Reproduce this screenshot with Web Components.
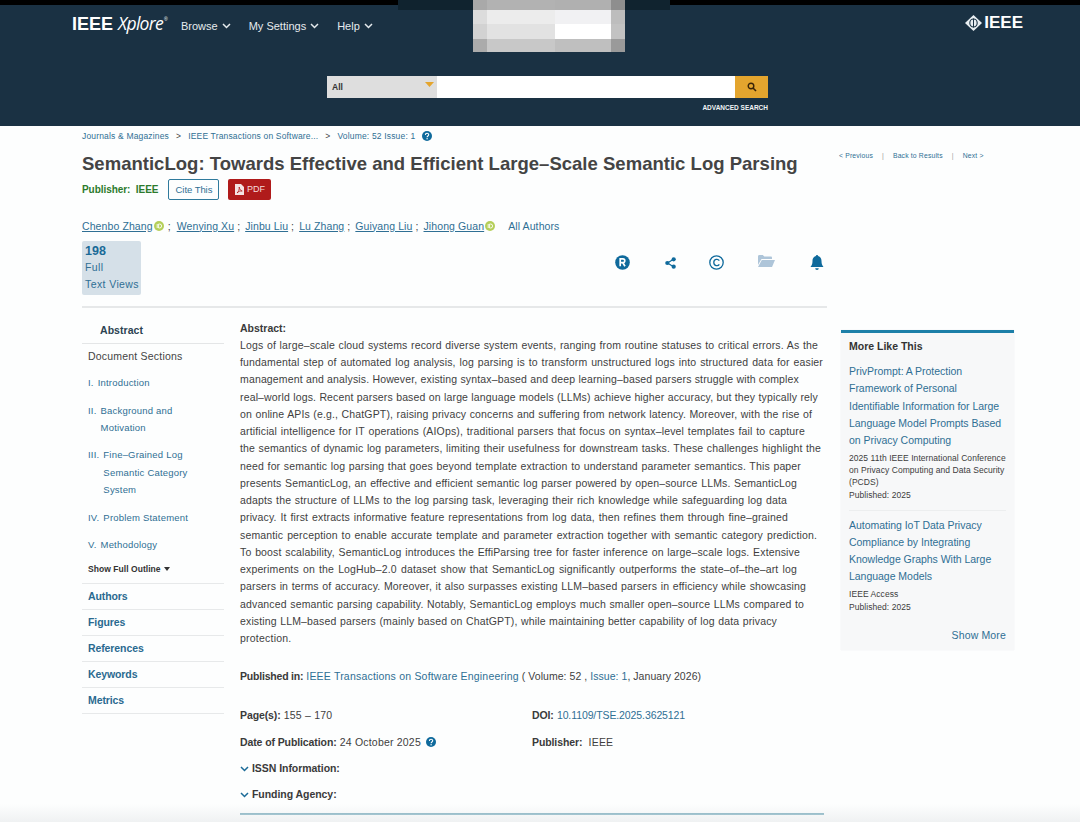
<!DOCTYPE html>
<html><head><meta charset="utf-8">
<style>
html,body{margin:0;padding:0;background:#fdfefe;}
body{width:1080px;height:822px;overflow:hidden;position:relative;font-family:"Liberation Sans",Arial,sans-serif;color:#3c3c3c;}
</style></head>
<body>
<ieee-header></ieee-header>
<article-page></article-page>
<photo-fade></photo-fade>
<script>
const LINK='#2f6f94';
function def(name,html){
  customElements.define(name,class extends HTMLElement{
    constructor(){super();this.attachShadow({mode:'open'}).innerHTML=html;}
  });
}
const orcid=`<svg width="10" height="10" viewBox="0 0 10 10" style="vertical-align:-0.5px"><circle cx="5" cy="5" r="5" fill="#b5cf5a"/><path d="M3.2 3v4M4.6 3v4h1a2 2 0 0 0 0-4z" fill="none" stroke="#fff" stroke-width=".9"/></svg>`;
const help=`<svg width="10" height="10" viewBox="0 0 10 10"><circle cx="5" cy="5" r="5" fill="#0f6a9c"/><path d="M3.4 3.9c0-2.1 3.3-2.1 3.3-.1 0 1.2-1.6 1.2-1.6 2.4" fill="none" stroke="#fff" stroke-width="1.1"/><circle cx="5.1" cy="7.7" r=".7" fill="#fff"/></svg>`;
const chev=`<svg width="9" height="6" viewBox="0 0 9 6"><path d="M1 1l3.5 3.5L8 1" fill="none" stroke="currentColor" stroke-width="1.5"/></svg>`;

def('photo-fade',`<style>
:host{position:absolute;left:0;right:0;bottom:0;height:18px;background:linear-gradient(rgba(238,240,241,0),rgba(238,240,241,.9));pointer-events:none;}
</style>`);

def('pixel-blur',`<style>
:host{position:absolute;left:473px;top:0;width:152px;height:52px;display:grid;grid-template-columns:14px 68px 56px 14px;grid-template-rows:10px 14px 15px 13px;}
i{display:block}
</style>
<i style="background:#a9a9a9"></i><i style="background:#b2b2b2"></i><i style="background:#b0b0b0"></i><i style="background:#8e8e8e"></i>
<i style="background:#dcdcdc"></i><i style="background:#ececec"></i><i style="background:#f1f1f3"></i><i style="background:#bdbdbd"></i>
<i style="background:#d2d2d2"></i><i style="background:#e2e2e2"></i><i style="background:#fff"></i><i style="background:#c2c2c2"></i>
<i style="background:#ababab"></i><i style="background:#c8c8c8"></i><i style="background:#bfbfbf"></i><i style="background:#9a9a9a"></i>`);

def('ieee-header',`<style>
:host{display:block;height:126px;background:#1a3143;color:#fff;position:relative;overflow:hidden;font-family:"Liberation Sans",Arial,sans-serif;}
.black{height:5px;background:#000;}
.notch{position:absolute;left:398px;top:0;width:272px;height:10px;background:#10232f;}
.top{display:flex;align-items:center;padding:6px 57px 0 72px;height:26px;}
.logo{font:bold 18px "Liberation Sans Narrow","Liberation Sans",sans-serif;width:109px;white-space:nowrap;margin-top:-2px;}
.logo em{font:italic 400 17.500px "Open Sans","Liberation Sans",sans-serif;letter-spacing:-.7px;}
.logo sup{font:400 5px "Liberation Sans",sans-serif;vertical-align:9px;line-height:0;margin-left:1px;}
nav{display:flex;gap:18px;font-size:11px;color:#e6ebee;margin-top:3px;}
nav span{display:flex;align-items:center;gap:4px;white-space:nowrap;}
.brand{margin-left:auto;display:flex;align-items:center;gap:2px;font:bold 17px "Liberation Sans",sans-serif;margin-top:-3px;}
.search{display:flex;margin:39px 0 0 327px;width:441px;height:22px;}
.sel{width:110px;background:#dedede;color:#333;font-size:8.5px;font-weight:bold;display:flex;align-items:center;padding-left:5px;box-sizing:border-box;position:relative;}
.sel svg{position:absolute;right:3px;top:6px;}
.inp{flex:1;background:#fff;}
.btn{width:33px;background:#e4a52e;display:flex;align-items:center;justify-content:center;}
.adv{width:441px;margin:6px 0 0 327px;text-align:right;font-size:6.5px;font-weight:bold;color:#f0f3f5;}
</style>
<div class="black"></div><div class="notch"></div>
<div class="top">
  <div class="logo">IEEE <em>Xplore</em><sup>®</sup></div>
  <nav><span>Browse ${chev}</span><span>My Settings ${chev}</span><span>Help ${chev}</span></nav>
  <div class="brand"><svg width="17" height="16" viewBox="0 0 17 16"><path d="M8.5 0l8.500 8-8.500 8L0 8z" fill="#e8eef2"/><ellipse cx="8.500" cy="8" rx="3.700" ry="4" fill="none" stroke="#1a3143" stroke-width="1.100"/><path d="M8.500 3.500v9" stroke="#1a3143" stroke-width="1"/></svg>IEEE</div>
</div>
<div class="search">
  <div class="sel">All<svg width="9" height="5" viewBox="0 0 9 5"><path d="M0 0h9L4.500 5z" fill="#e4a52e"/></svg></div>
  <div class="inp"></div>
  <div class="btn"><svg width="10" height="10" viewBox="0 0 10 10"><circle cx="4" cy="4" r="2.800" fill="none" stroke="#3a2408" stroke-width="1.400"/><path d="M6 6l3 3" stroke="#3a2408" stroke-width="1.600"/></svg></div>
</div>
<div class="adv">ADVANCED SEARCH</div>
<pixel-blur></pixel-blur>`);

def('article-head',`<style>
:host{display:block;width:745px;border-bottom:2px solid #e6e8e9;height:182px;box-sizing:border-box;position:relative;}
.crumb{display:flex;align-items:center;font-size:8.500px;color:${LINK};height:19px;letter-spacing:.17px;white-space:nowrap;}
.crumb b{font-weight:400;margin:0 7px;color:#444;}
.crumb svg{margin-left:7px;}
h1{margin:8px 0 0;font-size:18.500px;line-height:21px;font-weight:bold;color:#444;letter-spacing:.02px;white-space:nowrap;}
.pub{display:flex;align-items:center;margin-top:4px;height:22px;font-size:10px;font-weight:bold;color:#2c7a2c;letter-spacing:-.05px;}
.cite{margin-left:10px;width:51px;height:21px;box-sizing:border-box;border:1px solid #2f7a9c;border-radius:2px;color:${LINK};font-weight:400;font-size:9.500px;display:flex;align-items:center;justify-content:center;}
.pdf{margin-left:9px;width:43px;height:21px;background:#b01b1b;border-radius:2px;color:#f4dcdc;font-weight:400;font-size:9px;display:flex;align-items:center;justify-content:center;gap:3px;}
.authors{margin-top:18px;height:15px;display:flex;align-items:center;font-size:10.500px;letter-spacing:.1px;color:#444;white-space:nowrap;}
.authors a{color:${LINK};text-decoration:underline;}
.authors svg{margin-left:1px;}
.authors i{font-style:normal;margin:0 5px 0 3px;}
.all{color:${LINK};margin-left:13px;}
.row{display:flex;margin-top:8px;}
.metric{width:59px;height:54px;box-sizing:border-box;background:#d5e0e8;border-radius:2px;padding:3px 3px;color:#2f6f94;font-size:10.500px;line-height:17px;letter-spacing:.4px;white-space:nowrap;}
.metric b{display:block;font-size:12.500px;line-height:15px;color:#1a6a97;font-weight:bold;letter-spacing:0;}
.icons{position:absolute;left:533px;top:127px;display:flex;align-items:center;width:212px;height:18px;}
.icons svg{position:absolute;}
</style>
<div class="crumb">Journals &amp; Magazines<b>&gt;</b>IEEE Transactions on Software...<b>&gt;</b>Volume: 52 Issue: 1${help}</div>
<h1>SemanticLog: Towards Effective and Efficient Large–Scale Semantic Log Parsing</h1>
<div class="pub">Publisher:&nbsp; IEEE<span class="cite">Cite This</span><span class="pdf"><svg width="9" height="11" viewBox="0 0 9 11"><path d="M0 0h6l3 3v8H0z" fill="#f4e4e4"/><path d="M2 9c1.500-1 2.500-3.500 2.200-6 .5 2.500 1.300 3.500 3 4-2-.2-3.500.3-5.200 2z" fill="none" stroke="#b01b1b" stroke-width=".8"/></svg>PDF</span></div>
<div class="authors"><a>Chenbo Zhang</a>${orcid}<i style="margin-left:4px;margin-right:6px">;</i><a>Wenying Xu</a><i>;</i><a>Jinbu Liu</a><i>;</i><a>Lu Zhang</a><i>;</i><a>Guiyang Liu</a><i>;</i><a>Jihong Guan</a>${orcid}<span class="all">All Authors</span></div>
<div class="row"><div class="metric"><b>198</b>Full<br>Text Views</div></div>
<div class="icons">
<svg style="left:0" width="15" height="15" viewBox="0 0 15 15"><circle cx="7.500" cy="7.500" r="7.300" fill="#0f6a9c"/><path d="M5.200 11.200V3.900h2.700c2.500 0 2.500 3.800 0 3.800H5.200M7.800 7.700l2.200 3.500" fill="none" stroke="#fff" stroke-width="1.700"/></svg>
<svg style="left:50px;top:4px" width="11" height="12" viewBox="0 0 11 12"><path d="M8.500 2.200L2.500 6l6 3.800" fill="none" stroke="#0f6a9c" stroke-width="1.200"/><circle cx="8.700" cy="2.300" r="2.100" fill="#0f6a9c"/><circle cx="2.300" cy="6" r="2.100" fill="#0f6a9c"/><circle cx="8.700" cy="9.700" r="2.100" fill="#0f6a9c"/></svg>
<svg style="left:94px" width="15" height="15" viewBox="0 0 15 15"><circle cx="7.500" cy="7.500" r="6.700" fill="none" stroke="#0f6a9c" stroke-width="1.300"/><path d="M10.300 5.600C9 3.500 4.800 4 4.800 7.500S9 11.500 10.300 9.400" fill="none" stroke="#0f6a9c" stroke-width="1.300"/></svg>
<svg style="left:143px;top:2px" width="17" height="12" viewBox="0 0 17 12"><path d="M0 1.500C0 .7.500 0 1.300 0h3.500l1.500 1.500h6.500c.7 0 1.200.5 1.200 1.200V4H3.500L0 10z" fill="#aec5d9"/><path d="M3.800 5H17l-3 7H0z" fill="#aec5d9"/></svg>
<svg style="left:195px;top:2px" width="14" height="16" viewBox="0 0 14 16"><path d="M7 1c3 0 4.500 2.300 4.500 5 0 3 .7 4.500 2 6H.5c1.300-1.500 2-3 2-6C2.500 3.300 4 1 7 1z" fill="#0f6a9c"/><circle cx="7" cy="1.300" r="1.200" fill="#0f6a9c"/><path d="M5.200 13.200h3.600a1.800 1.800 0 0 1-3.600 0z" fill="#0f6a9c"/></svg>
</div>`);

def('side-nav',`<style>
:host{display:block;width:142px;font-size:10px;color:${LINK};}
.abs{height:36px;box-sizing:border-box;padding:15px 0 0 18px;font-size:10.500px;font-weight:bold;color:#2c4352;border-bottom:1px solid #e4e6e7;line-height:14px;letter-spacing:.05px;}
.doc{padding:5px 0 0 6px;line-height:14px;font-size:10.500px;color:#444;letter-spacing:.2px;height:20px;}
ol{list-style:none;margin:0;padding:5px 0 0 6px;}
li{display:flex;gap:4px;line-height:17.300px;margin-bottom:10.300px;letter-spacing:.2px;font-size:9.500px;}
.more{padding-left:6px;font-size:8.500px;font-weight:bold;color:#333;height:21px;line-height:14px;margin-top:-2px;letter-spacing:.05px;}
.more svg{margin-left:1px;vertical-align:1px;}
.s{border-top:1px solid #e7e9ea;height:26px;box-sizing:border-box;padding-left:6px;line-height:25px;font-weight:bold;font-size:10.500px;letter-spacing:-.1px;color:#2a6a90;}
.s:last-child{border-bottom:1px solid #e7e9ea;height:27px;}
</style>
<div class="abs">Abstract</div>
<div class="doc">Document Sections</div>
<ol>
<li><span>I.</span><span>Introduction</span></li>
<li><span>II.</span><span>Background and<br>Motivation</span></li>
<li><span>III.</span><span>Fine–Grained Log<br>Semantic Category<br>System</span></li>
<li><span>IV.</span><span>Problem Statement</span></li>
<li><span>V.</span><span>Methodology</span></li>
</ol>
<div class="more">Show Full Outline <svg width="6" height="4" viewBox="0 0 6 4"><path d="M0 0h6L3 4z" fill="#333"/></svg></div>
<div class="s">Authors</div><div class="s">Figures</div><div class="s">References</div><div class="s">Keywords</div><div class="s">Metrics</div>`);

const lines=[
[578,'Logs of large–scale cloud systems record diverse system events, ranging from routine statuses to critical errors. As the'],
[583,'fundamental step of automated log analysis, log parsing is to transform unstructured logs into structured data for easier'],
[559,'management and analysis. However, existing syntax–based and deep learning–based parsers struggle with complex'],
[578,'real–world logs. Recent parsers based on large language models (LLMs) achieve higher accuracy, but they typically rely'],
[572,'on online APIs (e.g., ChatGPT), raising privacy concerns and suffering from network latency. Moreover, with the rise of'],
[565,'artificial intelligence for IT operations (AIOps), traditional parsers that focus on syntax–level templates fail to capture'],
[581,'the semantics of dynamic log parameters, limiting their usefulness for downstream tasks. These challenges highlight the'],
[561,'need for semantic log parsing that goes beyond template extraction to understand parameter semantics. This paper'],
[557,'presents SemanticLog, an effective and efficient semantic log parser powered by open–source LLMs. SemanticLog'],
[547,'adapts the structure of LLMs to the log parsing task, leveraging their rich knowledge while safeguarding log data'],
[548,'privacy. It first extracts informative feature representations from log data, then refines them through fine–grained'],
[577,'semantic perception to enable accurate template and parameter extraction together with semantic category prediction.'],
[560,'To boost scalability, SemanticLog introduces the EffiParsing tree for faster inference on large–scale logs. Extensive'],
[557,'experiments on the LogHub–2.0 dataset show that SemanticLog significantly outperforms the state–of–the–art log'],
[566,'parsers in terms of accuracy. Moreover, it also surpasses existing LLM–based parsers in efficiency while showcasing'],
[564,'advanced semantic parsing capability. Notably, SemanticLog employs much smaller open–source LLMs compared to'],
[537,'existing LLM–based parsers (mainly based on ChatGPT), while maintaining better capability of log data privacy']
].map(([w,t])=>`<p class="j" style="width:${w}px">${t}</p>`).join('');

def('abstract-body',`<style>
:host{display:block;width:584px;font-size:10.500px;line-height:17.240px;color:#3f3f3f;letter-spacing:.15px;}
b{color:#3a3a3a;letter-spacing:-.1px;}
a{color:${LINK};}
p{margin:0;white-space:nowrap;}
p.j{white-space:normal;text-align:justify;text-align-last:justify;height:17.240px;}
.h{font-weight:bold;color:#3a3a3a;margin-top:11px;line-height:18px;letter-spacing:0;}
.last{letter-spacing:.22px;}
.pubin{margin-top:21px;letter-spacing:.05px;}
.pubin b{letter-spacing:-.2px;}
.pubin a:first-of-type{letter-spacing:.2px;}
.grid{display:grid;grid-template-columns:292px 1fr;margin-top:22px;row-gap:9px;letter-spacing:.2px;}
.doi{letter-spacing:-.1px;}
.x{display:flex;align-items:center;gap:3px;height:26px;font-weight:bold;color:#3a3a3a;letter-spacing:-.05px;}
.x svg{color:#1a6a97;}
.rule{margin-top:5px;height:2px;background:#4f93a8;}
.q{display:inline-block;margin-left:2px;vertical-align:-1px;line-height:0;}
</style>
<p class="h">Abstract:</p>
${lines}
<p class="last">protection.</p>
<p class="pubin"><b>Published in:</b> <a>IEEE Transactions on Software Engineering</a> ( Volume: 52 , <a>Issue: 1</a>, January 2026)</p>
<div class="grid">
<p><b>Page(s):</b> 155 – 170</p><p><b>DOI:</b> <a class="doi">10.1109/TSE.2025.3625121</a></p>
<p><b>Date of Publication:</b> 24 October 2025 <span class="q">${help}</span></p><p><b>Publisher:</b>&nbsp; IEEE</p>
</div>
<div class="x" style="margin-top:5px">${chev}<span>ISSN Information:</span></div>
<div class="x">${chev}<span>Funding Agency:</span></div>
<div class="rule"></div>`);

def('more-like',`<style>
:host{display:block;width:173px;height:320px;box-sizing:border-box;border-top:3px solid #1c7fa8;background:#f7f8f9;padding:6px 8px 0;color:#3c3c3c;box-shadow:0 0 1px #e6e8ea;}
h3{margin:0;font-size:10.500px;line-height:14px;font-weight:bold;color:#333;}
a{display:block;font-size:10.500px;line-height:17.300px;color:${LINK};letter-spacing:-.03px;white-space:nowrap;}
.t{margin-top:10px;}
small{display:block;font-size:8.500px;line-height:11.700px;letter-spacing:.06px;}
.y{margin-top:-1px;line-height:15px;}
hr{border:0;border-top:1px solid #eceeef;margin:7px 0 6px 0;}
.sm{text-align:right;font-size:10.500px;line-height:14px;color:${LINK};margin-top:13px;letter-spacing:.15px;}
</style>
<h3>More Like This</h3>
<a class="t">PrivPrompt: A Protection<br>Framework of Personal<br>Identifiable Information for Large<br>Language Model Prompts Based<br>on Privacy Computing</a>
<small style="margin-top:4px">2025 11th IEEE International Conference<br>on Privacy Computing and Data Security<br>(PCDS)</small>
<small class="y">Published: 2025</small>
<hr>
<a>Automating IoT Data Privacy<br>Compliance by Integrating<br>Knowledge Graphs With Large<br>Language Models</a>
<small style="margin-top:3px">IEEE Access</small>
<small class="y" style="margin-top:0">Published: 2025</small>
<div class="sm">Show More</div>`);

def('result-nav',`<style>
:host{display:flex;align-items:center;font-size:6.800px;color:${LINK};letter-spacing:.17px;white-space:nowrap;}
i{font-style:normal;color:#999;margin:0 9px;}
</style><span>&lt; Previous</span><i>|</i><span>Back to Results</span><i>|</i><span>Next &gt;</span>`);

def('article-page',`<style>
:host{display:grid;grid-template-columns:745px 187px;padding-left:82px;grid-template-rows:auto auto;column-gap:11px;}
.aside{padding-top:26px;}
.body{display:flex;gap:16px;padding-top:0;}
.r{padding-top:22px;margin-left:3px;}
</style>
<article-head></article-head>
<div class="aside"><result-nav style="margin-left:1px"></result-nav></div>
<div class="body"><side-nav></side-nav><abstract-body></abstract-body></div>
<div class="r"><more-like></more-like></div>`);
</script>
</body></html>
